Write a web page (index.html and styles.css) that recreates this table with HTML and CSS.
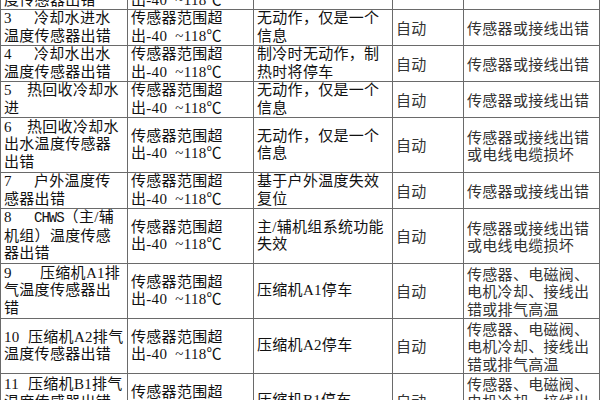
FILE: index.html
```html
<!DOCTYPE html>
<html lang="zh-CN">
<head>
<meta charset="utf-8">
<title>传感器故障表</title>
<link rel="stylesheet" href="styles.css">
</head>
<body>
<table class="sheet">
  <colgroup>
    <col class="w-c1"><col class="w-c2"><col class="w-c3"><col class="w-c4"><col class="w-c5">
  </colgroup>
  <tbody>
    <tr class="h2">
      <td class="c1"><span class="n g23">2</span>冷冻水出水温<br>度传感器出错</td>
      <td class="c2">传感器范围超<br>出-40&nbsp; ~118℃</td>
      <td class="c3">无动作</td>
      <td class="c4">自动</td>
      <td class="c5">传感器或接线出错</td>
    </tr>
    <tr class="h2">
      <td class="c1"><span class="n g30">3</span>冷却水进水<br>温度传感器出错</td>
      <td class="c2">传感器范围超<br>出-40&nbsp; ~118℃</td>
      <td class="c3">无动作，仅是一个<br>信息</td>
      <td class="c4">自动</td>
      <td class="c5">传感器或接线出错</td>
    </tr>
    <tr class="h2">
      <td class="c1"><span class="n g30">4</span>冷却水出水<br>温度传感器出错</td>
      <td class="c2">传感器范围超<br>出-40&nbsp; ~118℃</td>
      <td class="c3">制冷时无动作，制<br>热时将停车</td>
      <td class="c4">自动</td>
      <td class="c5">传感器或接线出错</td>
    </tr>
    <tr class="h2">
      <td class="c1"><span class="n g23">5</span>热回收冷却水<br>进</td>
      <td class="c2">传感器范围超<br>出-40&nbsp; ~118℃</td>
      <td class="c3">无动作，仅是一个<br>信息</td>
      <td class="c4">自动</td>
      <td class="c5">传感器或接线出错</td>
    </tr>
    <tr class="h3">
      <td class="c1"><span class="n g23">6</span>热回收冷却水<br>出水温度传感器<br>出错</td>
      <td class="c2">传感器范围超<br>出-40&nbsp; ~118℃</td>
      <td class="c3">无动作，仅是一个<br>信息</td>
      <td class="c4">自动</td>
      <td class="c5">传感器或接线出错<br>或电线电缆损坏</td>
    </tr>
    <tr class="h2">
      <td class="c1"><span class="n g30">7</span>户外温度传<br>感器出错</td>
      <td class="c2">传感器范围超<br>出-40&nbsp; ~118℃</td>
      <td class="c3">基于户外温度失效<br>复位</td>
      <td class="c4">自动</td>
      <td class="c5">传感器或接线出错</td>
    </tr>
    <tr class="h3">
      <td class="c1"><span class="n g30">8</span><span class="mono">CHWS</span>（主/辅<br>机组）温度传感<br>器出错</td>
      <td class="c2">传感器范围超<br>出-40&nbsp; ~118℃</td>
      <td class="c3">主/辅机组系统功能<br>失效</td>
      <td class="c4">自动</td>
      <td class="c5">传感器或接线出错<br>或电线电缆损坏</td>
    </tr>
    <tr class="h3">
      <td class="c1"><span class="n g36">9</span>压缩机A1排<br>气温度传感器出<br>错</td>
      <td class="c2">传感器范围超<br>出-40&nbsp; ~118℃</td>
      <td class="c3">压缩机A1停车</td>
      <td class="c4">自动</td>
      <td class="c5">传感器、电磁阀、<br>电机冷却、接线出<br>错或排气高温</td>
    </tr>
    <tr class="h3">
      <td class="c1"><span class="n g24">10</span>压缩机A2排气<br>温度传感器出错</td>
      <td class="c2">传感器范围超<br>出-40&nbsp; ~118℃</td>
      <td class="c3">压缩机A2停车</td>
      <td class="c4">自动</td>
      <td class="c5">传感器、电磁阀、<br>电机冷却、接线出<br>错或排气高温</td>
    </tr>
    <tr class="h3">
      <td class="c1 top"><span class="n g24">11</span>压缩机B1排气<br>温度传感器出错</td>
      <td class="c2">传感器范围超<br>出-40&nbsp; ~118℃</td>
      <td class="c3">压缩机B1停车</td>
      <td class="c4">自动</td>
      <td class="c5">传感器、电磁阀、<br>电机冷却、接线出<br>错或排气高温</td>
    </tr>
  </tbody>
</table>
</body>
</html>
```

FILE: styles.css
```css
html, body {
  margin: 0;
  padding: 0;
  background: #ffffff;
}

body {
  width: 600px;
  height: 400px;
  overflow: hidden;
}

.sheet {
  border-collapse: collapse;
  table-layout: fixed;
  width: 599px;
  margin-top: -27px;
  font-size: 15px;
  line-height: 17.5px;
  letter-spacing: 0.3px;
  color: #111111;
}

.w-c1 { width: 127px; }
.w-c2 { width: 126px; }
.w-c3 { width: 139px; }
.w-c4 { width: 71px; }
.w-c5 { width: 136px; }

.sheet td {
  border: 1px solid #6a6a6a;
  padding: 0 2px 0 3px;
  vertical-align: middle;
  white-space: nowrap;
  overflow: hidden;
}

.sheet td.top {
  vertical-align: top;
  padding-top: 2px;
}

.h2 { height: 36px; }
.h3 { height: 55px; }

.c1, .c2, .c3 {
  font-family: "Liberation Serif", "Noto Sans CJK SC", serif;
}

.c3, .c4, .c5 {
  padding-left: 4px;
}

.c4, .c5 {
  font-family: "Noto Sans CJK SC", sans-serif;
  color: #333333;
}

.n {
  display: inline-block;
}

.g23 { width: 23px; }
.g24 { width: 24px; }
.g30 { width: 30px; }
.g36 { width: 36px; }

.mono {
  font-family: "Liberation Mono", monospace;
  font-size: 14px;
  letter-spacing: -1px;
}
```
